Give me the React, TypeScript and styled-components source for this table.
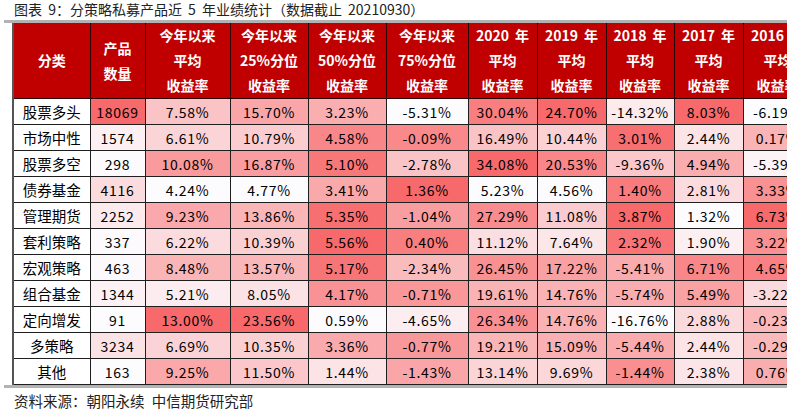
import styled, { createGlobalStyle } from "styled-components";

const GlobalStyle = createGlobalStyle`
  html, body {
    margin: 0;
    padding: 0;
    background: #ffffff;
    overflow: hidden;
  }
`;

const Page = styled.div`
  width: 787px;
  height: 415px;
  overflow: hidden;
  font-family: "Noto Sans CJK SC", "Noto Sans", sans-serif;
  color: #111;
`;

const Title = styled.div`
  line-height: 18px;
  margin-bottom: 2px;
  padding-left: 14px;
  font-size: 14px;
  color: #222;
  white-space: nowrap;
  word-spacing: 3px;
`;

const Frame = styled.div`
  margin-left: 4px;
  padding-left: 8px;
  border-top: 3px solid #b3b3b3;
  border-bottom: 3px solid #b3b3b3;
  width: 900px;
`;

const Table = styled.table`
  border-collapse: collapse;
  table-layout: fixed;
  width: 799px;
  border-left: 2px solid #555;
`;

const HeadCell = styled.th`
  background: #c00000;
  color: #fff;
  font-weight: bold;
  font-size: 14px;
  line-height: 25px;
  height: 75px;
  padding: 0;
  text-align: center;
  vertical-align: middle;
  border: 1px solid #2a0000;
  border-top: none;
  white-space: nowrap;
  word-spacing: 3px;
`;

const Row = styled.tr`
  height: 26px;
`;

const NameCell = styled.td`
  background: #fff;
  font-size: 14.5px;
  text-align: center;
  padding: 0;
  border: 1px solid #1e1e1e;
  white-space: nowrap;
  color: #000;
`;

const NumCell = styled.td`
  font-size: 14px;
  letter-spacing: 0.7px;
  text-align: center;
  padding: 0;
  border: 1px solid #1e1e1e;
  white-space: nowrap;
  color: #000;
`;

const Footer = styled.div`
  margin-top: 3px;
  padding-left: 14px;
  font-size: 14.5px;
  line-height: 20px;
  color: #222;
  white-space: nowrap;
`;

const widths = [77, 55, 85, 78, 78, 82, 69, 69, 68, 69, 69];

const headers: string[][] = [
  ["分类"],
  ["产品", "数量"],
  ["今年以来", "平均", "收益率"],
  ["今年以来", "25%分位", "收益率"],
  ["今年以来", "50%分位", "收益率"],
  ["今年以来", "75%分位", "收益率"],
  ["2020 年", "平均", "收益率"],
  ["2019 年", "平均", "收益率"],
  ["2018 年", "平均", "收益率"],
  ["2017 年", "平均", "收益率"],
  ["2016 年", "平均", "收益率"],
];

type Fund = { name: string; count: number; values: number[] };

const funds: Fund[] = [
  { name: "股票多头", count: 18069, values: [7.58, 15.7, 3.23, -5.31, 30.04, 24.7, -14.32, 8.03, -6.19] },
  { name: "市场中性", count: 1574, values: [6.61, 10.79, 4.58, -0.09, 16.49, 10.44, 3.01, 2.44, 0.17] },
  { name: "股票多空", count: 298, values: [10.08, 16.87, 5.1, -2.78, 34.08, 20.53, -9.36, 4.94, -5.39] },
  { name: "债券基金", count: 4116, values: [4.24, 4.77, 3.41, 1.36, 5.23, 4.56, 1.4, 2.81, 3.33] },
  { name: "管理期货", count: 2252, values: [9.23, 13.86, 5.35, -1.04, 27.29, 11.08, 3.87, 1.32, 6.73] },
  { name: "套利策略", count: 337, values: [6.22, 10.39, 5.56, 0.4, 11.12, 7.64, 2.32, 1.9, 3.22] },
  { name: "宏观策略", count: 463, values: [8.48, 13.57, 5.17, -2.34, 26.45, 17.22, -5.41, 6.71, 4.65] },
  { name: "组合基金", count: 1344, values: [5.21, 8.05, 4.17, -0.71, 19.61, 14.76, -5.74, 5.49, -3.22] },
  { name: "定向增发", count: 91, values: [13.0, 23.56, 0.59, -4.65, 26.34, 14.76, -16.76, 2.88, -0.23] },
  { name: "多策略", count: 3234, values: [6.69, 10.35, 3.36, -0.77, 19.21, 15.09, -5.44, 2.44, -0.29] },
  { name: "其他", count: 163, values: [9.25, 11.5, 1.44, -1.43, 13.14, 9.69, -1.44, 2.38, 0.76] },
];

// excel style white -> red colour scale, per column
const LOW = [252, 252, 255];
const HIGH = [248, 105, 107];

const scale = (v: number, min: number, max: number) => {
  const t = max === min ? 0 : (v - min) / (max - min);
  const c = LOW.map((l, i) => Math.round(l + (HIGH[i] - l) * t));
  return `rgb(${c[0]}, ${c[1]}, ${c[2]})`;
};

const columns: number[][] = [
  funds.map((f) => f.count),
  ...funds[0].values.map((_, i) => funds.map((f) => f.values[i])),
];

const ranges = columns.map((col) => [Math.min(...col), Math.max(...col)]);

const pct = (v: number) => `${v.toFixed(2)}%`;

const App = () => {
  return (
    <Page>
      <GlobalStyle />
      <Title>图表 9：分策略私募产品近 5 年业绩统计（数据截止 20210930）</Title>
      <Frame>
        <Table>
          <colgroup>
            {widths.map((w, i) => (
              <col key={i} style={{ width: w }} />
            ))}
          </colgroup>
          <thead>
            <tr>
              {headers.map((lines, i) => (
                <HeadCell key={i}>
                  {lines.map((l, j) => (
                    <div key={j}>{l}</div>
                  ))}
                </HeadCell>
              ))}
            </tr>
          </thead>
          <tbody>
            {funds.map((f) => (
              <Row key={f.name}>
                <NameCell>{f.name}</NameCell>
                <NumCell style={{ background: scale(f.count, ranges[0][0], ranges[0][1]) }}>
                  {f.count}
                </NumCell>
                {f.values.map((v, i) => (
                  <NumCell
                    key={i}
                    style={{ background: scale(v, ranges[i + 1][0], ranges[i + 1][1]) }}
                  >
                    {pct(v)}
                  </NumCell>
                ))}
              </Row>
            ))}
          </tbody>
        </Table>
      </Frame>
      <Footer>资料来源：朝阳永续{"\u2002"}中信期货研究部</Footer>
    </Page>
  );
};

export default App;
